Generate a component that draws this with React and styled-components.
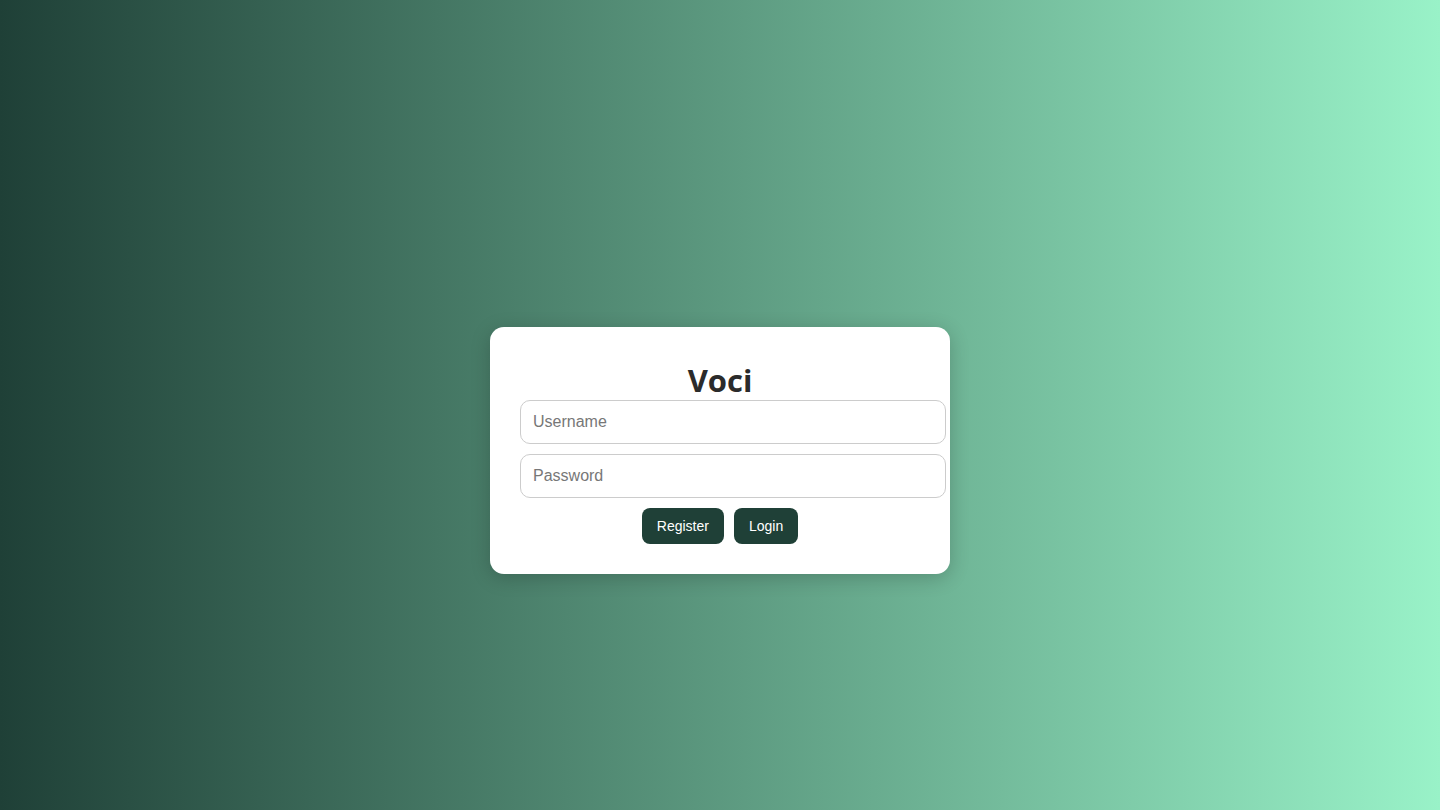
import React from 'react';
import styled, { createGlobalStyle } from 'styled-components';

const GlobalStyle = createGlobalStyle`
  html, body, #root {
    margin: 0;
    height: 100%;
  }

  body {
    font-family: 'Liberation Sans', Arial, sans-serif;
  }
`;

const Page = styled.div`
  box-sizing: border-box;
  height: 100vh;
  padding-top: 91px;
  display: flex;
  align-items: center;
  justify-content: center;
  background: linear-gradient(to right, #1f4037, #99f2c8);
`;

const Card = styled.div`
  width: 400px;
  padding: 30px;
  background: #fff;
  border-radius: 14px;
  box-shadow: 0 4px 20px rgba(0, 0, 0, 0.2);
  display: flex;
  flex-direction: column;
  align-items: flex-start;
`;

const Title = styled.h1`
  align-self: stretch;
  margin: 0;
  height: 43px;
  line-height: 46px;
  text-align: center;
  font-family: 'Open Sans', 'Noto Sans', sans-serif;
  font-size: 31px;
  font-weight: 700;
  color: #2b2b2b;
`;

const Input = styled.input`
  width: 400px;
  padding: 12px;
  margin-bottom: 10px;
  border: 1px solid #ccc;
  border-radius: 10px;
  font-family: 'Liberation Sans', Arial, sans-serif;
  font-size: 16px;
  line-height: 18px;
  height: 18px;
  color: #333;
  outline: none;

  &::placeholder {
    color: #777;
  }
`;

const Actions = styled.div`
  align-self: stretch;
  display: flex;
  justify-content: center;
  gap: 10px;
`;

const Button = styled.button`
  padding: 10px 15px;
  border: none;
  border-radius: 8px;
  background: #1f4037;
  color: #fff;
  font-family: 'Liberation Sans', Arial, sans-serif;
  font-size: 14px;
  line-height: 16px;
  cursor: pointer;
`;

const App = () => (
  <>
    <GlobalStyle />
    <Page>
      <Card>
        <Title>Voci</Title>
        <Input type="text" placeholder="Username" />
        <Input type="password" placeholder="Password" />
        <Actions>
          <Button>Register</Button>
          <Button>Login</Button>
        </Actions>
      </Card>
    </Page>
  </>
);

export default App;
